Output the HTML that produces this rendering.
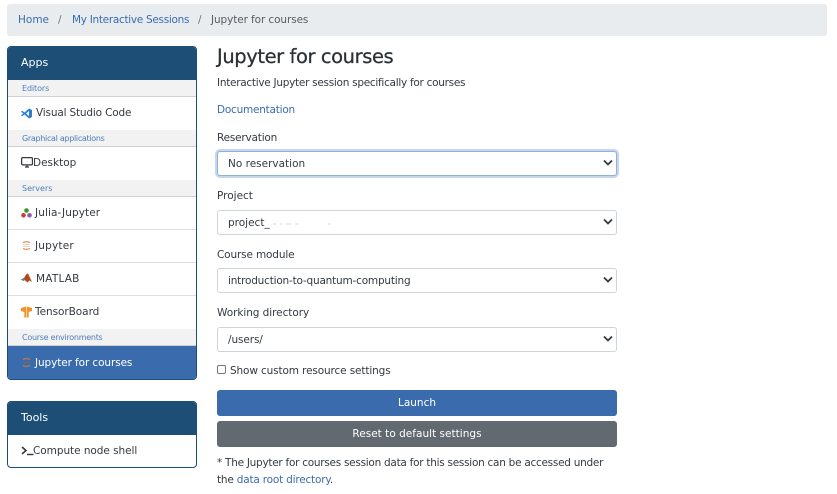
<!DOCTYPE html>
<html lang="en">
<head>
<meta charset="utf-8">
<title>Jupyter for courses</title>
<style>
html,body{margin:0;padding:0;background:#fff}
body{position:relative;width:837px;height:494px;overflow:hidden;font-family:"DejaVu Sans","Liberation Sans",sans-serif;font-size:10.5px;color:#333a40}
a{color:#3a6cad;text-decoration:none}
.t{position:absolute;white-space:nowrap;line-height:14px;margin-top:1px}
.crumb{position:absolute;left:7px;top:4px;width:820px;height:32px;background:#e9ecef;border-radius:3px}
.panel{position:absolute;left:7px;width:188px;border:1px solid #1d4f76;border-radius:4px;background:#fff;overflow:hidden}
.head{position:absolute;left:0;top:0;width:188px;height:33px;background:#1d4f76}
.sec{position:absolute;left:0;width:188px;height:16px;background:#f2f2f2;border-bottom:1px solid #d0d0d0}
.line{position:absolute;left:0;width:188px;height:1px;background:#dedede}
.act{position:absolute;left:0;width:188px;height:33px;background:#3a6cad}
.sel{position:absolute;left:217px;width:398px;height:23px;border:1px solid #ced4da;border-radius:3px;background:#fff}
.sel.f{border-color:#8fb2dd;box-shadow:0 0 0 2px #c6d6ec}
.chev{position:absolute;left:603px}
.btn{position:absolute;left:217px;width:400px;height:26px;border-radius:3px;color:#fff;text-align:center;line-height:25px;margin-top:0}
.btn span{position:relative;top:1px}
svg{position:absolute;display:block}
.sub{font-size:8px;color:#4f7dba}
.w{color:#fff}
</style>
</head>
<body>
<div class="crumb"></div>
<a class="t" style="left:18px;top:12px">Home</a>
<span class="t" style="left:58px;top:12px;color:#6c757d">/</span>
<a class="t" style="left:72px;top:12px;letter-spacing:-.3px">My Interactive Sessions</a>
<span class="t" style="left:198px;top:12px;color:#6c757d">/</span>
<span class="t" style="left:211px;top:12px;color:#555c63;letter-spacing:-.1px">Jupyter for courses</span>

<div class="panel" style="top:46px;height:332px">
  <div class="head"></div>
  <div class="sec" style="top:33px"></div>
  <div class="line" style="top:83px"></div>
  <div class="sec" style="top:83px"></div>
  <div class="line" style="top:133px"></div>
  <div class="sec" style="top:133px"></div>
  <div class="line" style="top:182px"></div>
  <div class="line" style="top:215px"></div>
  <div class="line" style="top:248px"></div>
  <div class="sec" style="top:282px"></div>
  <div class="act" style="top:299px"></div>
</div>
<span class="t w" style="left:21px;top:55px;font-size:11px">Apps</span>
<span class="t sub" style="left:22px;top:81px;letter-spacing:-.1px">Editors</span>
<svg style="left:21px;top:108px" width="11" height="11" viewBox="0 0 11 11"><path d="M8 .5 11 2v7L8 10.500 3.500 6.500 1.300 8.300 0 7.500 2.200 5.500 0 3.500 1.300 2.700 3.500 4.500zM8 3 5 5.500 8 8z" fill="#2f7fd0"/></svg>
<span class="t" style="left:36px;top:105px;letter-spacing:-.17px">Visual Studio Code</span>
<span class="t sub" style="left:22px;top:131px;letter-spacing:-.3px">Graphical applications</span>
<svg style="left:21px;top:157px" width="12" height="11" viewBox="0 0 12 11"><rect x=".6" y=".6" width="10.800" height="7.300" rx="1" fill="none" stroke="#33393f" stroke-width="1.200"/><path d="M4 10h4M6 8v2" stroke="#33393f" stroke-width="1.200"/></svg>
<span class="t" style="left:33px;top:155px">Desktop</span>
<span class="t sub" style="left:22px;top:181px">Servers</span>
<svg style="left:21px;top:208px" width="11" height="10" viewBox="0 0 11 10"><circle cx="5.500" cy="2.500" r="2.300" fill="#389826"/><circle cx="2.500" cy="7.300" r="2.300" fill="#cb3c33"/><circle cx="8.500" cy="7.300" r="2.300" fill="#9558b2"/></svg>
<span class="t" style="left:35px;top:205px;letter-spacing:.1px">Julia-Jupyter</span>
<svg style="left:22px;top:240px" width="9" height="11" viewBox="0 0 9 11"><path d="M1 2.500Q4.500 .8 8 2.500M1 8.500Q4.500 10.200 8 8.500" fill="none" stroke="#e8833a" stroke-width="1.100"/><path d="M1.500 4.500h6M1.500 6.500h6" stroke="#c9c9c9" stroke-width=".8"/></svg>
<span class="t" style="left:35px;top:238px;letter-spacing:.2px">Jupyter</span>
<svg style="left:21px;top:273px" width="11" height="10" viewBox="0 0 11 10"><path d="M0 6.500 3 5 5.500 1 7 .5 11 9 8.500 7.500 6.500 9.500 3.500 7z" fill="#b5471c"/><path d="M0 6.500 3 5 4.200 6.800 2.500 8z" fill="#3d8b95"/></svg>
<span class="t" style="left:36px;top:271px;letter-spacing:.2px">MATLAB</span>
<svg style="left:21px;top:306px" width="11" height="12" viewBox="0 0 11 12"><path d="M0 2 5.200 .5V11.500H3.300V6L0 5zM5.800 .5 11 2V5L7.700 6V11.500H5.800z" fill="#f5922b"/></svg>
<span class="t" style="left:35px;top:304px;letter-spacing:-.05px">TensorBoard</span>
<span class="t sub" style="left:22px;top:330px;letter-spacing:-.27px">Course environments</span>
<svg style="left:22px;top:357px" width="9" height="11" viewBox="0 0 9 11"><path d="M1 2.500Q4.500 .8 8 2.500M1 8.500Q4.500 10.200 8 8.500" fill="none" stroke="#d0743a" stroke-width="1.200"/><path d="M1.500 5.500h6" stroke="#6b6b6b" stroke-width="1.200"/></svg>
<span class="t w" style="left:35px;top:355px;letter-spacing:-.1px">Jupyter for courses</span>

<div class="panel" style="top:401px;height:65px"><div class="head"></div></div>
<span class="t w" style="left:21px;top:410px;font-size:11px">Tools</span>
<svg style="left:21px;top:446px" width="13" height="10" viewBox="0 0 13 10"><path d="M1 1 5 4.500 1 8" fill="none" stroke="#33393f" stroke-width="1.600"/><path d="M6 8.500h6.500" stroke="#33393f" stroke-width="1.400"/></svg>
<span class="t" style="left:33px;top:443px;letter-spacing:-.05px">Compute node shell</span>

<span class="t" style="left:217px;top:45px;font-size:19.500px;line-height:22px;color:#2b3035;letter-spacing:-.42px;-webkit-text-stroke:.25px #2b3035">Jupyter for courses</span>
<span class="t" style="left:217px;top:75px;letter-spacing:-.28px">Interactive Jupyter session specifically for courses</span>
<a class="t" style="left:217px;top:102px;letter-spacing:-.23px">Documentation</a>

<span class="t" style="left:217px;top:130px;letter-spacing:-.2px">Reservation</span>
<div class="sel f" style="top:151px"></div>
<span class="t" style="left:228px;top:156px">No reservation</span>
<svg class="chev" style="top:159px" width="10" height="8" viewBox="0 0 10 8"><path d="M1 1.500 5 5.500 9 1.500" fill="none" stroke="#343a40" stroke-width="1.800"/></svg>

<span class="t" style="left:217px;top:188px">Project</span>
<div class="sel" style="top:210px"></div>
<span class="t" style="left:228px;top:215px">project_</span>
<svg style="left:271px;top:221px" width="62" height="6" viewBox="0 0 62 6"><path d="M2 3h3M9 3h2M14 3h6M24 3h4M57 3h3" stroke="#dcdcdc" stroke-width="1"/></svg>
<svg class="chev" style="top:218px" width="10" height="8" viewBox="0 0 10 8"><path d="M1 1.500 5 5.500 9 1.500" fill="none" stroke="#343a40" stroke-width="1.800"/></svg>

<span class="t" style="left:217px;top:247px;letter-spacing:-.15px">Course module</span>
<div class="sel" style="top:268px"></div>
<span class="t" style="left:228px;top:273px;letter-spacing:-.2px">introduction-to-quantum-computing</span>
<svg class="chev" style="top:276px" width="10" height="8" viewBox="0 0 10 8"><path d="M1 1.500 5 5.500 9 1.500" fill="none" stroke="#343a40" stroke-width="1.800"/></svg>

<span class="t" style="left:217px;top:305px;letter-spacing:-.06px">Working directory</span>
<div class="sel" style="top:327px"></div>
<span class="t" style="left:228px;top:332px;letter-spacing:-.1px">/users/</span>
<svg class="chev" style="top:335px" width="10" height="8" viewBox="0 0 10 8"><path d="M1 1.500 5 5.500 9 1.500" fill="none" stroke="#343a40" stroke-width="1.800"/></svg>

<div style="position:absolute;left:217px;top:365px;width:7px;height:7px;border:1px solid #767676;border-radius:2px;background:#fff"></div>
<span class="t" style="left:230px;top:363px;letter-spacing:-.13px">Show custom resource settings</span>

<div class="btn" style="top:390px;background:#3a6cad"><span>Launch</span></div>
<div class="btn" style="top:421px;background:#636970"><span style="letter-spacing:.02px">Reset to default settings</span></div>

<span class="t" style="left:217px;top:455px;letter-spacing:-.27px">* The Jupyter for courses session data for this session can be accessed under</span>
<span class="t" style="left:217px;top:472px;letter-spacing:-.2px">the <a>data root directory</a>.</span>
</body>
</html>
